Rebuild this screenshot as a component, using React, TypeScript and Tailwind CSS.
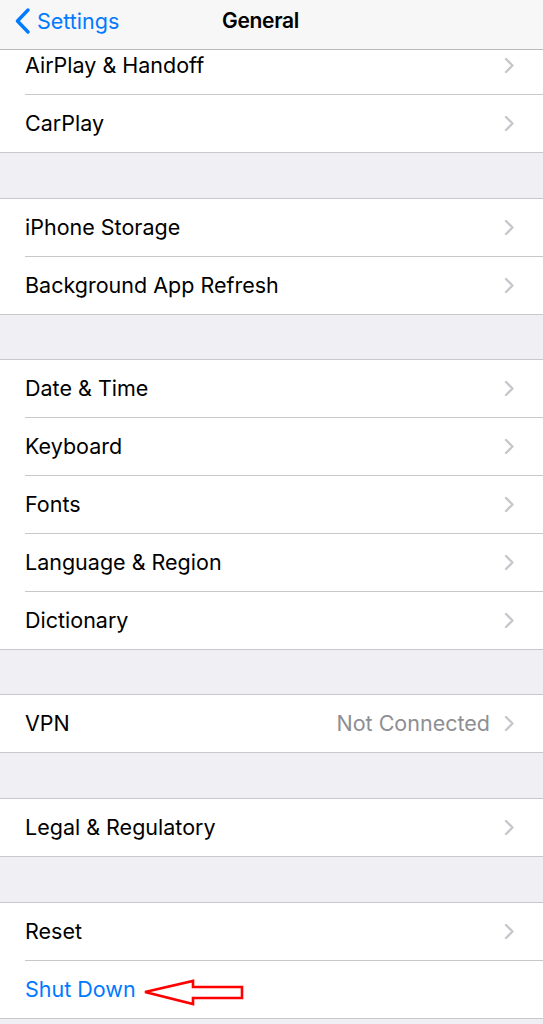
const font = { fontFamily: 'Inter, "Liberation Sans", sans-serif' }

type Row = { label: string; detail?: string; chevron?: boolean; blue?: boolean }

const sections: { gap: string; rows: Row[] }[] = [
  { gap: 'pt-[45px]', rows: [{ label: 'iPhone Storage' }, { label: 'Background App Refresh' }] },
  {
    gap: 'pt-[44px]',
    rows: [
      { label: 'Date & Time' },
      { label: 'Keyboard' },
      { label: 'Fonts' },
      { label: 'Language & Region' },
      { label: 'Dictionary' },
    ],
  },
  { gap: 'pt-[44px]', rows: [{ label: 'VPN', detail: 'Not Connected' }] },
  { gap: 'pt-[45px]', rows: [{ label: 'Legal & Regulatory' }] },
  { gap: 'pt-[45px]', rows: [{ label: 'Reset' }, { label: 'Shut Down', chevron: false, blue: true }] },
]

function Chevron() {
  return (
    <svg width="11" height="17" viewBox="0 0 11 17" className="shrink-0">
      <path d="M2 2 L8.5 8.5 L2 15" fill="none" stroke="#c7c7cc" strokeWidth="2.4" strokeLinecap="round" strokeLinejoin="round" />
    </svg>
  )
}

function RowItem({ row, shut }: { row: Row; shut?: boolean }) {
  const showChevron = row.chevron !== false
  return (
    <div className="relative flex h-[57px] items-center pl-[25px] pr-[28px]">
      <span className={`text-[21.5px] ${row.blue ? 'text-[#007aff]' : 'text-black'}`}>{row.label}</span>
      <div className="ml-auto flex items-center gap-[14px]">
        {row.detail && <span className="text-[21.5px] text-[#8e8e93]">{row.detail}</span>}
        {showChevron && <Chevron />}
      </div>
      {shut && (
        <svg width="104" height="28" viewBox="0 0 104 28" className="absolute left-[141px] top-[17px]">
          <path
            d="M4 14 L52 3 L52 9 L101 9 L101 20 L52 20 L52 26 Z"
            fill="none"
            stroke="#ff0000"
            strokeWidth="2.6"
            strokeLinejoin="miter"
          />
        </svg>
      )}
    </div>
  )
}

function Separator() {
  return <div className="ml-[25px] h-px bg-[#c8c7cc]" />
}

export default function App() {
  return (
    <div className="h-[1024px] w-[543px] overflow-hidden bg-[#efeff4]" style={font}>
      <div className="relative flex h-[50px] items-center border-b border-[#b9b9bd] bg-[#f7f7f7] pb-[7px]">
        <div className="flex items-center pl-[14px] text-[#007aff]">
          <svg width="18" height="26" viewBox="0 0 18 26">
            <path d="M14 2 L3.5 13 L14 24" fill="none" stroke="#007aff" strokeWidth="3.4" strokeLinecap="round" strokeLinejoin="round" />
          </svg>
          <span className="ml-[5px] text-[21.5px]">Settings</span>
        </div>
        <span className="absolute left-[222px] text-[21px] font-semibold tracking-[-0.3px] text-black">General</span>
      </div>

      <div className="border-b border-[#c8c7cc] bg-white">
        <div className="h-[44px] overflow-hidden">
          <div className="-mt-[13px]">
            <RowItem row={{ label: 'AirPlay & Handoff' }} />
          </div>
        </div>
        <Separator />
        <RowItem row={{ label: 'CarPlay' }} />
      </div>

      {sections.map((s, i) => (
        <div key={i} className={s.gap}>
          <div className="border-y border-[#c8c7cc] bg-white">
            {s.rows.map((r, j) => (
              <div key={r.label}>
                {j > 0 && <Separator />}
                <RowItem row={r} shut={r.label === 'Shut Down'} />
              </div>
            ))}
          </div>
        </div>
      ))}
    </div>
  )
}
